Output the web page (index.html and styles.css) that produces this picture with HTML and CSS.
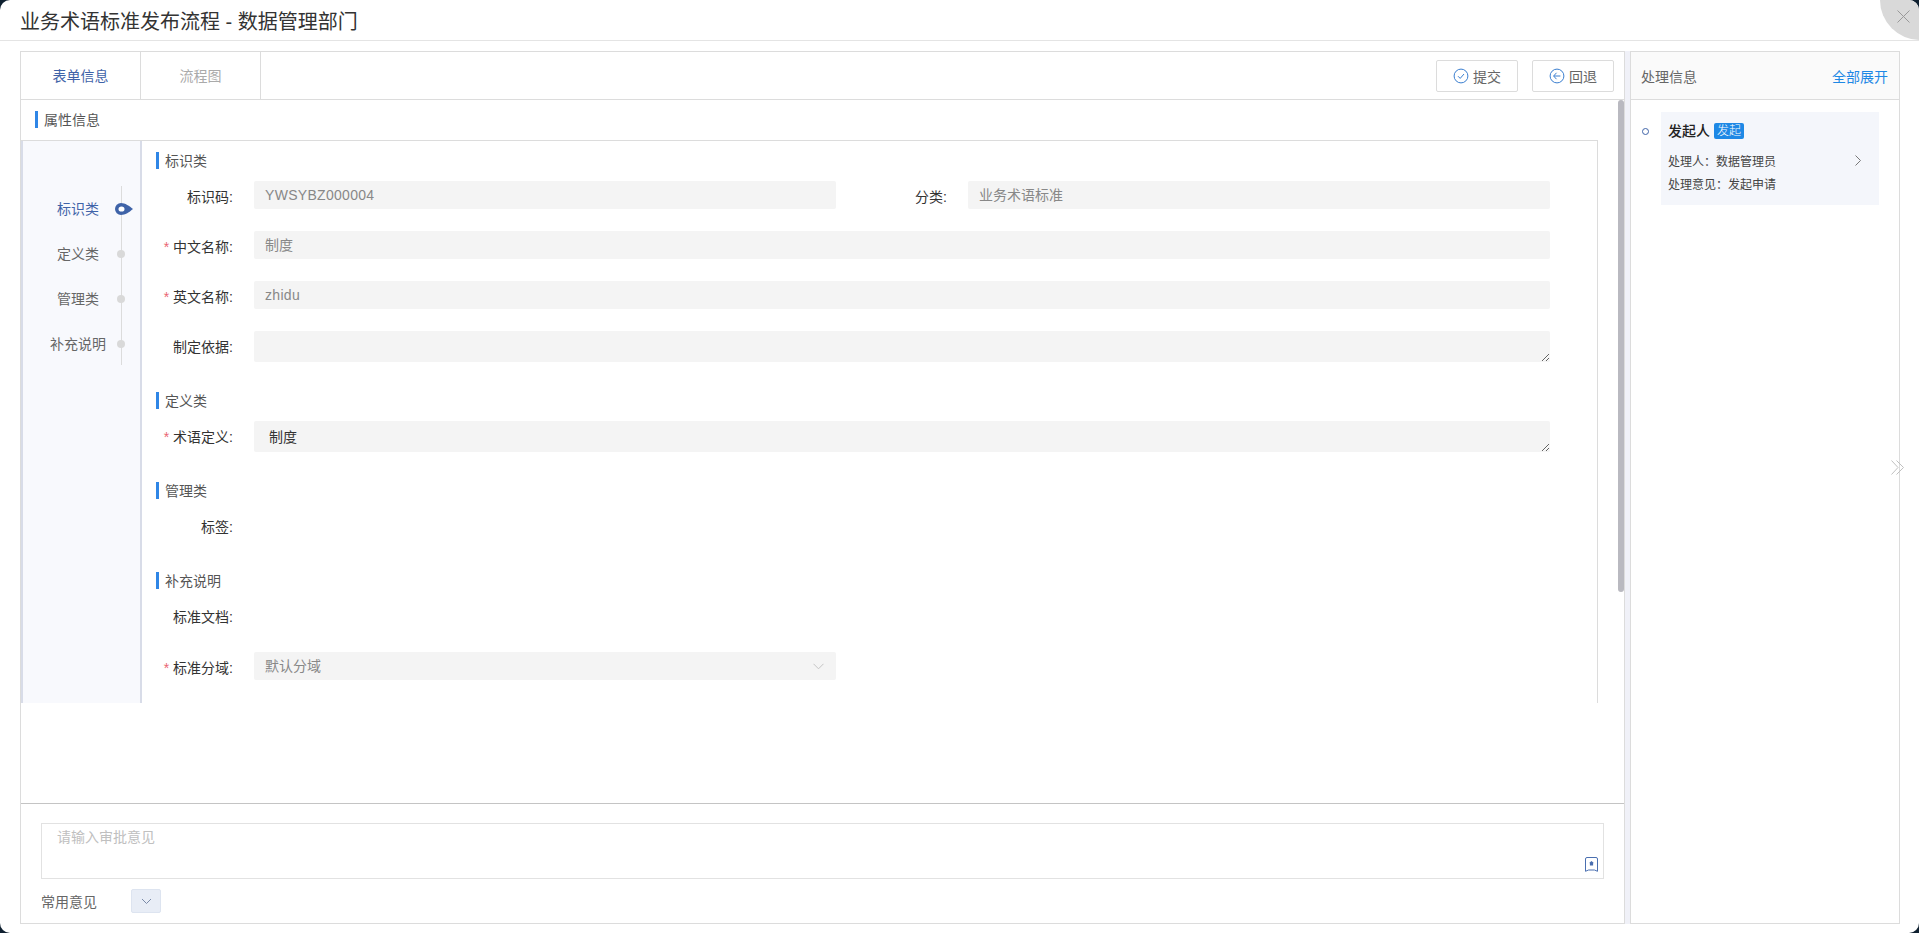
FILE: index.html
```html
<!DOCTYPE html>
<html lang="zh">
<head>
<meta charset="utf-8">
<title>业务术语标准发布流程</title>
<link rel="stylesheet" href="styles.css">
</head>
<body>
<div class="modal">
  <header class="head">业务术语标准发布流程 - 数据管理部门</header>
  <button class="close" aria-label="关闭"><svg width="13" height="13" viewBox="0 0 13 13"><path d="M.5.5l12 12M12.5.5l-12 12" stroke="#999" fill="none"/></svg></button>
  <div class="main">
    <section class="left">
      <div class="tabs">
        <div class="tab tab-active">表单信息</div>
        <div class="tab">流程图</div>
        <div class="actions">
          <button class="btn"><svg width="16" height="16" viewBox="0 0 16 16" fill="none" stroke="#3b7fd0"><circle cx="8" cy="8" r="6.9"/><path d="M5 8.2l2.2 2.2L11 6"/></svg>提交</button>
          <button class="btn"><svg width="16" height="16" viewBox="0 0 16 16" fill="none" stroke="#3b7fd0"><circle cx="8" cy="8" r="6.9"/><path d="M7.5 4.8L4.6 8l2.9 3.2M4.8 8h6.6"/></svg>回退</button>
        </div>
      </div>
      <div class="content">
        <div class="scroll">
          <div class="attr-head"><h2 class="sec-title">属性信息</h2></div>
          <div class="box">
            <nav class="nav">
              <ul class="steps">
                <li class="step step-active"><span class="step-text">标识类</span><svg class="marker" width="18" height="12" viewBox="0 0 18 12"><path d="M6 0c4 0 8.500 3 12 6-3.500 3-8 6-12 6A6 6 0 0 1 6 0z" fill="#3f63a8"/><ellipse cx="6.500" cy="6" rx="3" ry="2.600" fill="#fff"/></svg></li>
                <li class="step"><span class="step-text">定义类</span><i class="dot"></i></li>
                <li class="step"><span class="step-text">管理类</span><i class="dot"></i></li>
                <li class="step"><span class="step-text">补充说明</span><i class="dot"></i></li>
              </ul>
            </nav>
            <div class="form">
              <section class="sec">
                <h3 class="sec-title">标识类</h3>
                <div class="row">
                  <div class="field field-a"><label class="lbl">标识码:</label><div class="val val-code">YWSYBZ000004</div></div>
                  <div class="field field-b"><label class="lbl lbl-b">分类:</label><div class="val">业务术语标准</div></div>
                </div>
                <div class="row"><label class="lbl"><em class="star">*</em>中文名称:</label><div class="val val-full">制度</div></div>
                <div class="row"><label class="lbl"><em class="star">*</em>英文名称:</label><div class="val val-full val-code">zhidu</div></div>
                <div class="row"><label class="lbl">制定依据:</label><textarea class="ta" readonly></textarea></div>
              </section>
              <section class="sec">
                <h3 class="sec-title">定义类</h3>
                <div class="row"><label class="lbl"><em class="star">*</em>术语定义:</label><textarea class="ta ta-dark" readonly>制度</textarea></div>
              </section>
              <section class="sec">
                <h3 class="sec-title">管理类</h3>
                <div class="row row-tag"><label class="lbl">标签:</label></div>
              </section>
              <section class="sec">
                <h3 class="sec-title">补充说明</h3>
                <div class="row row-doc"><label class="lbl">标准文档:</label></div>
                <div class="row"><label class="lbl"><em class="star">*</em>标准分域:</label><div class="val val-select">默认分域<svg width="11" height="7" viewBox="0 0 11 7"><path d="M.5.8l5 5 5-5" fill="none" stroke="#c4c4c4"/></svg></div></div>
              </section>
            </div>
          </div>
          <div class="thumb"></div>
        </div>
      </div>
      <footer class="foot">
        <div class="opinion">
          <textarea class="opinion-input" placeholder="请输入审批意见"></textarea>
          <svg class="opinion-icon" width="13" height="15" viewBox="0 0 13 15" fill="none" stroke="#4a6fb0"><path d="M2 .5h9A1.500 1.500 0 0 1 12.500 2v12.300l-3-1.300h-6l-3 1.300V2A1.500 1.500 0 0 1 2 .5z"/><path d="M6.500 4l2.300 2-.7.200v2.300H4.900V6.200L4.200 6z" fill="#4a6fb0" stroke="none"/></svg>
        </div>
        <div class="common"><span class="common-label">常用意见</span><button class="common-btn" aria-label="展开"><svg width="11" height="7" viewBox="0 0 11 7"><path d="M1 1l4.500 4.500L10 1" fill="none" stroke="#7a8aa8"/></svg></button></div>
      </footer>
    </section>
    <div class="gutter"></div>
    <aside class="right">
      <div class="right-head"><span class="right-title">处理信息</span><a class="expand">全部展开</a></div>
      <div class="timeline">
        <i class="ring"></i>
        <div class="card">
          <div class="card-title"><b class="who">发起人</b><span class="tag">发起</span></div>
          <div class="card-line"><span>处理人：数据管理员</span><svg width="6" height="11" viewBox="0 0 6 11"><path d="M.5.5l5 5-5 5" fill="none" stroke="#777"/></svg></div>
          <div class="card-line">处理意见：发起申请</div>
        </div>
      </div>
    </aside>
  </div>
  <svg class="fold" width="13" height="15" viewBox="0 0 13 15" fill="none" stroke="#c0c0c0"><path d="M.5.500l6.500 7-6.500 7M5.500.500l7 7-7 7"/></svg>
</div>
</body>
</html>
```

FILE: styles.css
```css
* { box-sizing: border-box; }
html, body { margin: 0; height: 100%; }
body {
  background: #0f2030;
  overflow: hidden;
  font-family: "Liberation Sans", "Noto Sans CJK SC", sans-serif;
  font-size: 14px;
  color: #333;
}
button { font: inherit; }
ul { list-style: none; margin: 0; padding: 0; }
h2, h3 { margin: 0; font-weight: 400; }
em { font-style: normal; }

.modal {
  position: relative;
  height: 933px;
  background: #fff;
  border-radius: 10px;
  overflow: hidden;
  display: flex;
  flex-direction: column;
}
.head {
  flex: none;
  height: 41px;
  padding-left: 20px;
  border-bottom: 1px solid #e4e4e4;
  font-size: 20px;
  line-height: 45px;
  color: #333;
}
.close {
  position: absolute;
  top: -40px;
  right: -41px;
  width: 80px;
  height: 80px;
  border: 0;
  padding: 0;
  border-radius: 50%;
  background: #d9d9d9;
}
.close svg { position: absolute; left: 17px; top: 50px; }

.main {
  flex: 1;
  min-height: 0;
  display: flex;
  padding: 10px 19px 9px 20px;
}
.left {
  flex: 0 0 1605px;
  display: flex;
  flex-direction: column;
  border: 1px solid #dcdcdc;
}
.gutter { flex: 0 0 5px; background: #f0f1f8; }
.right {
  flex: 0 0 270px;
  border: 1px solid #dcdcdc;
}

.tabs {
  flex: none;
  height: 48px;
  display: flex;
  border-bottom: 1px solid #dcdcdc;
}
.tab {
  width: 120px;
  border-right: 1px solid #dcdcdc;
  text-align: center;
  line-height: 49px;
  color: #aaa;
}
.tab-active { color: #3f63a8; }
.actions {
  margin-left: auto;
  display: flex;
  gap: 14px;
  padding: 8px 10px 0 0;
}
.btn {
  width: 82px;
  height: 32px;
  display: flex;
  align-items: center;
  justify-content: center;
  gap: 4px;
  background: #fff;
  border: 1px solid #dcdcdc;
  border-radius: 2px;
  color: #666;
  padding: 0;
}

.content { flex: 1; min-height: 0; }
.scroll {
  position: relative;
  height: 603px;
  overflow: hidden;
}
.thumb {
  position: absolute;
  top: 0;
  right: 0;
  width: 6px;
  height: 492px;
  background: #b9b9c0;
  border-radius: 3px;
}
.attr-head {
  height: 40px;
  padding: 11px 0 0 14px;
}
.sec-title {
  height: 17px;
  padding-left: 6px;
  border-left: 3px solid #2f86e6;
  font-size: 14px;
  line-height: 19px;
  color: #555;
}
.box {
  height: 571px;
  margin-right: 26px;
  display: flex;
  border-top: 1px solid #dcdcdc;
  border-right: 1px solid #dcdcdc;
}
.nav {
  flex: 0 0 121px;
  padding-top: 45px;
  background: #f8f9fd;
  border-left: 2px solid #d8dce8;
  border-right: 2px solid #d8dce8;
}
.steps { position: relative; }
.steps::before {
  content: "";
  position: absolute;
  left: 98px;
  top: 0;
  width: 1px;
  height: 179px;
  background: #dcdcdc;
}
.step {
  position: relative;
  height: 45px;
  display: flex;
  align-items: center;
  padding-left: 17px;
  color: #666;
}
.step-text { width: 76px; padding-bottom: 2px; text-align: center; }
.step-active { color: #3f63a8; }
.dot {
  width: 8px;
  height: 8px;
  margin-left: 1px;
  border-radius: 50%;
  background: #d9d9d9;
}
.marker { margin-left: -1px; }

.form { flex: 1; padding: 11px 0 0 14px; }
.sec { padding-bottom: 8px; }
.sec .sec-title { margin-bottom: 12px; }
.row {
  display: flex;
  align-items: flex-start;
  margin-bottom: 22px;
}
.row-tag { height: 31px; }
.row-doc { height: 29px; }
.field { display: flex; }
.field-a { flex: 0 0 680px; }
.lbl {
  flex: none;
  width: 77px;
  height: 28px;
  margin-right: 21px;
  text-align: right;
  line-height: 32px;
  color: #333;
  white-space: nowrap;
}
.lbl-b { width: 111px; }
.star {
  margin-right: 4px;
  color: #ea6572;
  font-size: 14px;
}
.val {
  width: 582px;
  height: 28px;
  padding-left: 11px;
  background: #f4f4f4;
  border-radius: 2px;
  line-height: 28px;
  color: #888;
}
.val-code { letter-spacing: .3px; }
.val-full { width: 1296px; }
.val-select {
  display: flex;
  align-items: center;
  justify-content: space-between;
  padding-right: 12px;
}
.ta {
  display: block;
  width: 1296px;
  height: 31px;
  padding: 6px 15px;
  border: 0;
  outline: 0;
  border-radius: 2px;
  background: #f4f4f4;
  font: inherit;
  line-height: 20px;
  color: #888;
}
.ta-dark { color: #333; }

.foot {
  flex: 0 0 120px;
  padding: 19px 20px 0;
  border-top: 1px solid #c4c4c4;
}
.opinion { position: relative; }
.opinion-input {
  display: block;
  width: 100%;
  height: 56px;
  padding: 3px 15px;
  border: 1px solid #e2e2e2;
  outline: 0;
  resize: none;
  font: inherit;
  line-height: 20px;
}
.opinion-input::placeholder { color: #c0c0c0; }
.opinion-icon { position: absolute; right: 6px; bottom: 7px; }
.common {
  display: flex;
  align-items: center;
  margin-top: 10px;
}
.common-label { width: 90px; color: #666; }
.common-btn {
  width: 30px;
  height: 24px;
  padding: 0;
  display: flex;
  align-items: center;
  justify-content: center;
  background: #e8edf6;
  border: 1px solid #dde4f0;
  border-radius: 2px;
}

.right-head {
  height: 48px;
  display: flex;
  align-items: center;
  justify-content: space-between;
  padding: 0 11px 0 10px;
  background: #fafafa;
  border-bottom: 1px solid #dcdcdc;
}
.right-title { color: #666; }
.expand { color: #1e88e5; }
.timeline {
  display: flex;
  align-items: flex-start;
  padding: 12px 0 0 11px;
}
.ring {
  flex: none;
  width: 7px;
  height: 7px;
  margin: 16px 12px 0 0;
  border: 1.500px solid #3f63a8;
  border-radius: 50%;
}
.card {
  width: 218px;
  height: 93px;
  padding: 11px 18px 0 7px;
  background: #f4f6fb;
  font-size: 12px;
  color: #444;
}
.card-title {
  display: flex;
  align-items: center;
  height: 16px;
  margin-bottom: 10px;
}
.who { padding-bottom: 2px; font-size: 14px; font-weight: 500; color: #222; }
.tag {
  width: 30px;
  height: 16px;
  margin-left: 4px;
  background: #1e88e5;
  border-radius: 2px;
  text-align: center;
  line-height: 16px;
  font-weight: 300;
  color: #fff;
}
.card-line {
  display: flex;
  align-items: center;
  justify-content: space-between;
  height: 23px;
}
.fold { position: absolute; left: 1891px; top: 460px; }
```
